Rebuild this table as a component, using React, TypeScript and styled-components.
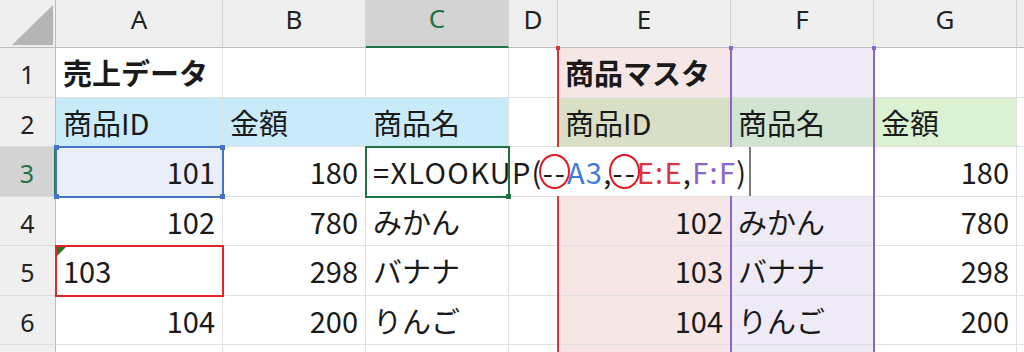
import React from "react";
import styled, { createGlobalStyle } from "styled-components";

const GREEN = "#217346";
const GRID = "#e1e1e1";
const CELL_FONT = `"Noto Sans CJK JP", "Noto Sans", sans-serif`;
const HEAD_FONT = `"Noto Sans", "Liberation Sans", sans-serif`;

const COLS = ["A", "B", "C", "D", "E", "F", "G", "H"];
const COL_WIDTHS = [167, 143, 143, 49, 173, 143, 143, 143];
const ROW_HEIGHTS = [50, 49, 50, 49, 50, 49, 49];

const PINK = "#f6e6e6";
const LAVENDER = "#efebf6";

type CellData = {
  text?: string;
  align?: "left" | "right";
  bold?: boolean;
  fill?: string;
};

// key: "row-col" (1-based)
const DATA: Record<string, CellData> = {
  "1-1": { text: "売上データ", bold: true },
  "1-5": { text: "商品マスタ", bold: true, fill: PINK },
  "1-6": { fill: LAVENDER },
  "2-1": { text: "商品ID", fill: "#c9ebf9" },
  "2-2": { text: "金額", fill: "#c9ebf9" },
  "2-3": { text: "商品名", fill: "#c9ebf9" },
  "2-5": { text: "商品ID", fill: "#d9dfc5" },
  "2-6": { text: "商品名", fill: "#d1e4d1" },
  "2-7": { text: "金額", fill: "#daf1d2" },
  "3-1": { text: "101", align: "right", fill: "#e9eef8" },
  "3-2": { text: "180", align: "right" },
  "3-7": { text: "180", align: "right" },
  "4-1": { text: "102", align: "right" },
  "4-2": { text: "780", align: "right" },
  "4-3": { text: "みかん" },
  "4-5": { text: "102", align: "right", fill: PINK },
  "4-6": { text: "みかん", fill: LAVENDER },
  "4-7": { text: "780", align: "right" },
  "5-1": { text: "103" },
  "5-2": { text: "298", align: "right" },
  "5-3": { text: "バナナ" },
  "5-5": { text: "103", align: "right", fill: PINK },
  "5-6": { text: "バナナ", fill: LAVENDER },
  "5-7": { text: "298", align: "right" },
  "6-1": { text: "104", align: "right" },
  "6-2": { text: "200", align: "right" },
  "6-3": { text: "りんご" },
  "6-5": { text: "104", align: "right", fill: PINK },
  "6-6": { text: "りんご", fill: LAVENDER },
  "6-7": { text: "200", align: "right" },
  "7-5": { fill: PINK },
  "7-6": { fill: LAVENDER },
};

const GlobalStyle = createGlobalStyle`
  html, body {
    margin: 0;
    padding: 0;
    background: #ffffff;
    overflow: hidden;
  }
`;

const Viewport = styled.div`
  width: 1024px;
  height: 352px;
  overflow: hidden;
  background: #ffffff;
`;

const Sheet = styled.div`
  display: grid;
  grid-template-columns: 56px ${COL_WIDTHS.map((w) => `${w}px`).join(" ")};
  grid-template-rows: 48px ${ROW_HEIGHTS.map((h) => `${h}px`).join(" ")};
  width: max-content;
`;

const Corner = styled.div`
  grid-row: 1;
  grid-column: 1;
  background: #efefef;
  border-right: 1px solid #bcbcbc;
  border-bottom: 1px solid #bcbcbc;
  box-sizing: border-box;
  svg {
    display: block;
  }
`;

const ColHead = styled.div<{ $c: number; $active?: boolean }>`
  grid-row: 1;
  grid-column: ${(p) => p.$c + 1};
  box-sizing: border-box;
  display: flex;
  align-items: center;
  justify-content: center;
  padding-bottom: 10px;
  background: ${(p) => (p.$active ? "#d3d3d3" : "#efefef")};
  color: ${(p) => (p.$active ? GREEN : "#222222")};
  border-right: 1px solid #d4d4d4;
  border-bottom: ${(p) => (p.$active ? `2px solid ${GREEN}` : "1px solid #bcbcbc")};
  font-family: ${HEAD_FONT};
  font-size: 26px;
`;

const RowHead = styled.div<{ $r: number; $active?: boolean }>`
  grid-row: ${(p) => p.$r + 1};
  grid-column: 1;
  box-sizing: border-box;
  display: flex;
  align-items: center;
  justify-content: center;
  padding-top: 3px;
  background: ${(p) => (p.$active ? "#d3d3d3" : "#efefef")};
  color: ${(p) => (p.$active ? GREEN : "#222222")};
  border-right: ${(p) => (p.$active ? `2px solid ${GREEN}` : "1px solid #bcbcbc")};
  border-bottom: 1px solid #dcdcdc;
  font-family: ${HEAD_FONT};
  font-size: 25px;
`;

const Cell = styled.div<{ $r: number; $c: number; $fill?: string; $align?: string; $bold?: boolean }>`
  grid-row: ${(p) => p.$r + 1};
  grid-column: ${(p) => p.$c + 1};
  box-sizing: border-box;
  display: flex;
  align-items: center;
  justify-content: ${(p) => (p.$align === "right" ? "flex-end" : "flex-start")};
  padding: 0 7px;
  background: ${(p) => p.$fill || "#ffffff"};
  border-right: 1px solid ${GRID};
  border-bottom: 1px solid ${GRID};
  font-family: ${CELL_FONT};
  font-size: 29px;
  font-weight: ${(p) => (p.$bold ? 700 : 400)};
  color: #1a1a1a;
  line-height: 1;
  white-space: nowrap;
`;

/* reference highlight of a whole column while editing the formula */
const ColumnRange = styled.div<{ $c: number; $color: string }>`
  grid-row: 2 / -1;
  grid-column: ${(p) => p.$c + 1};
  margin: 0 -1px 0 -1px;
  border-left: 2px solid ${(p) => p.$color};
  border-right: 2px solid ${(p) => p.$color};
  position: relative;
  z-index: 2;
  pointer-events: none;
`;

const Marker = styled.div<{ $r: number; $c: number; $color: string }>`
  grid-row: ${(p) => p.$r + 1};
  grid-column: ${(p) => p.$c + 1};
  margin: -1px;
  border: 2px solid ${(p) => p.$color};
  position: relative;
  z-index: 4;
  pointer-events: none;
`;

const Handle = styled.span<{ $x: "left" | "right"; $y: "top" | "bottom"; $color: string }>`
  position: absolute;
  width: 5px;
  height: 5px;
  background: ${(p) => p.$color};
  ${(p) => p.$x}: -3px;
  ${(p) => p.$y}: -3px;
`;

const TopTick = styled.span<{ $x: "left" | "right"; $color: string }>`
  position: absolute;
  top: -2px;
  ${(p) => p.$x}: -3px;
  width: 4px;
  height: 4px;
  background: ${(p) => p.$color};
`;

const ErrorFlag = styled.span`
  position: absolute;
  top: 0;
  left: 0;
  width: 0;
  height: 0;
  border-top: 9px solid #1f7a1f;
  border-right: 9px solid transparent;
`;

const EditBox = styled.div`
  grid-row: 4;
  grid-column: 4 / 8;
  margin: 0 2px 1px 0;
  background: #ffffff;
  z-index: 3;
  display: flex;
  align-items: center;
  padding-left: 7px;
  font-family: ${CELL_FONT};
  font-size: 29px;
  letter-spacing: 1.3px;
  line-height: 1;
  color: #1a1a1a;
  white-space: nowrap;
`;

const Ref = styled.span<{ $color: string }>`
  color: ${(p) => p.$color};
`;

const Circled = styled.span`
  position: relative;
  letter-spacing: 2px;
  &::after {
    content: "";
    position: absolute;
    left: -4px;
    right: -3px;
    top: -3px;
    bottom: -3px;
    border: 2px solid #e5161d;
    border-radius: 50%;
  }
`;

const Caret = styled.span`
  align-self: stretch;
  width: 2px;
  margin-left: 2px;
  background: #7d7d7d;
`;

export default function App() {
  const cells: React.ReactNode[] = [];
  for (let r = 1; r <= ROW_HEIGHTS.length; r++) {
    for (let c = 1; c <= COLS.length; c++) {
      const d = DATA[`${r}-${c}`] || {};
      cells.push(
        <Cell key={`${r}-${c}`} $r={r} $c={c} $fill={d.fill} $align={d.align} $bold={d.bold}>
          {d.text}
        </Cell>
      );
    }
  }

  return (
    <Viewport>
      <GlobalStyle />
      <Sheet>
        <Corner>
          <svg width="56" height="48" viewBox="0 0 56 48">
            <polygon points="12,45 53,45 53,5" fill="#b5b5b5" />
          </svg>
        </Corner>
        {/* H and row 7 sit at the window edge; their labels fall outside the view */}
        {COLS.map((name, i) => (
          <ColHead key={name} $c={i + 1} $active={name === "C"}>
            {name === "H" ? null : name}
          </ColHead>
        ))}
        {ROW_HEIGHTS.map((_, i) => (
          <RowHead key={i} $r={i + 1} $active={i + 1 === 3}>
            {i + 1 < 7 ? i + 1 : null}
          </RowHead>
        ))}

        {cells}

        <ColumnRange $c={5} $color="#d6353b">
          <TopTick $x="left" $color="#d6353b" />
        </ColumnRange>
        <ColumnRange $c={6} $color="#8d63cc">
          <TopTick $x="left" $color="#8d63cc" />
          <TopTick $x="right" $color="#8d63cc" />
        </ColumnRange>

        <EditBox>
          =XLOOKUP(
          <Circled>--</Circled>
          <Ref $color="#3f7bd9">A3</Ref>,<Circled>--</Circled>
          <Ref $color="#d9373d">E:E</Ref>,<Ref $color="#8d63cc">F:F</Ref>)
          <Caret />
        </EditBox>

        <Marker $r={3} $c={1} $color="#4472c4">
          <Handle $x="left" $y="top" $color="#4472c4" />
          <Handle $x="right" $y="top" $color="#4472c4" />
          <Handle $x="left" $y="bottom" $color="#4472c4" />
          <Handle $x="right" $y="bottom" $color="#4472c4" />
        </Marker>
        <Marker $r={5} $c={1} $color="#e8212b">
          <ErrorFlag />
        </Marker>
        <Marker $r={3} $c={3} $color={GREEN}>
          <Handle $x="right" $y="bottom" $color={GREEN} />
        </Marker>
      </Sheet>
    </Viewport>
  );
}
